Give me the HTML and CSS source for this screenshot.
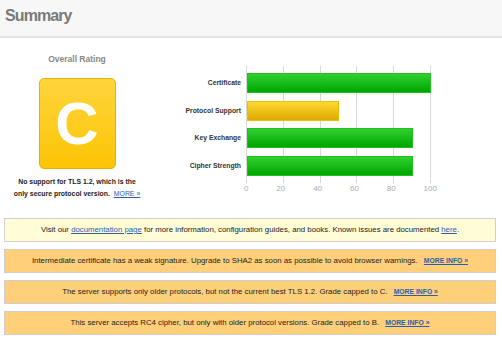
FILE: index.html
```html
<!DOCTYPE html>
<html lang="en">
    <head>
        <meta charset="UTF-8" />
        <title>Summary</title>
        <link rel="stylesheet" href="styles.css">
    </head>
    <body>
        <div class="page-header">
            <h1>Summary</h1>
        </div>
        <div class="summary">
            <div class="overview">
                <div class="rating">
                    <div class="rating-title">Overall Rating</div>
                    <div class="grade">C</div>
                    <p class="rating-note">
                        No support for TLS 1.2, which is the<br />
                        only secure protocol version. <a href="#" class="more">MORE &raquo;</a>
                    </p>
                </div>
                <div class="chart">
                    <div class="chart-labels">
                        <div class="chart-label">Certificate</div>
                        <div class="chart-label">Protocol Support</div>
                        <div class="chart-label">Key Exchange</div>
                        <div class="chart-label">Cipher Strength</div>
                    </div>
                    <div class="chart-plot">
                        <div class="chart-bars">
                            <div class="bar good" style="width: 100%"></div>
                            <div class="bar warn" style="width: 50%"></div>
                            <div class="bar good" style="width: 90%"></div>
                            <div class="bar good" style="width: 90%"></div>
                        </div>
                        <div class="chart-axis">
                            <span>0</span>
                            <span>20</span>
                            <span>40</span>
                            <span>60</span>
                            <span>80</span>
                            <span>100</span>
                        </div>
                    </div>
                </div>
            </div>

            <div class="notices">
                <div class="notice info">
                    Visit our <a href="#">documentation page</a> for more information, configuration guides, and books. Known issues are documented <a href="#">here</a>.
                </div>
                <div class="notice warning">
                    Intermediate certificate has a weak signature. Upgrade to SHA2 as soon as possible to avoid browser warnings.
                    <a href="#" class="more-info">MORE INFO &raquo;</a>
                </div>
                <div class="notice warning">
                    The server supports only older protocols, but not the current best TLS 1.2. Grade capped to C.
                    <a href="#" class="more-info">MORE INFO &raquo;</a>
                </div>
                <div class="notice warning">
                    This server accepts RC4 cipher, but only with older protocol versions. Grade capped to B.
                    <a href="#" class="more-info">MORE INFO &raquo;</a>
                </div>
            </div>
        </div>
    </body>
</html>
```

FILE: styles.css
```css
* {
    margin: 0;
    padding: 0;
    box-sizing: border-box;
}

body {
    font-family: "Liberation Sans", Arial, sans-serif;
    background-color: white;
    color: #222;
    width: 502px;
}

a {
    color: #2a5db0;
}

.page-header {
    background-color: #f7f7f7;
    height: 38px;
    padding: 6px 0 0 5px;
    border-bottom: 2px solid #e0e6e6;
}

.page-header h1 {
    font-size: 16px;
    line-height: 20px;
    font-weight: bold;
    letter-spacing: -0.9px;
    color: #7a7a7a;
}

.overview {
    display: flex;
}

/* left column: grade */
.rating {
    width: 154px;
    display: flex;
    flex-direction: column;
    align-items: center;
}

.rating-title {
    margin-top: 15px;
    font-size: 8.5px;
    line-height: 12px;
    font-weight: bold;
    color: #888;
}

.grade {
    margin-top: 13px;
    width: 77px;
    height: 91px;
    border: 1px solid #e3b200;
    border-radius: 5px;
    background: linear-gradient(#ffd53c, #fcc404);
    color: white;
    font-size: 60px;
    line-height: 89px;
    font-weight: bold;
    text-align: center;
}

.rating-note {
    margin-top: 7px;
    font-size: 6.9px;
    line-height: 12px;
    font-weight: bold;
    text-align: center;
    white-space: nowrap;
}

.rating-note .more {
    font-weight: normal;
    margin-left: 2px;
}

/* right column: bar chart */
.chart {
    display: flex;
    margin-top: 28px;
}

.chart-labels {
    width: 87px;
    padding-top: 7px;
    display: flex;
    flex-direction: column;
    gap: 7.5px;
}

.chart-label {
    height: 20px;
    line-height: 20px;
    text-align: right;
    font-size: 6.8px;
    font-weight: bold;
    color: #333;
}

.chart-plot {
    width: 185px;
    margin-left: 5px;
}

.chart-bars {
    display: flex;
    flex-direction: column;
    gap: 7.5px;
    padding: 7px 0 7px 1px;
    background: repeating-linear-gradient(to right, #d8d8d8 0 1px, transparent 1px 36.8px);
}

.bar {
    height: 20px;
    border: 1px solid;
}

.bar.good {
    background: linear-gradient(#2fd02f, #00a500);
    border-color: #20c020;
}

.bar.warn {
    background: linear-gradient(#ffd930, #deaa00);
    border-color: #ecc000;
}

.chart-axis {
    display: flex;
    justify-content: space-between;
    margin: 0 -6px 0 -2px;
    padding-top: 1px;
    font-size: 8px;
    line-height: 10px;
    color: #aaa;
}

/* notices under the chart */
.notices {
    margin-top: 18px;
    padding: 0 6px 0 4px;
    display: flex;
    flex-direction: column;
    gap: 7px;
}

.notice {
    height: 24px;
    line-height: 22px;
    border: 1px solid #cfcfcf;
    text-align: center;
    font-size: 7.8px;
    color: #222;
}

.notice.info {
    background-color: #fffcd6;
}

.notice.warning {
    background-color: #ffcf7a;
}

.more-info {
    font-size: 6.8px;
    font-weight: bold;
    margin-left: 4px;
}
```
